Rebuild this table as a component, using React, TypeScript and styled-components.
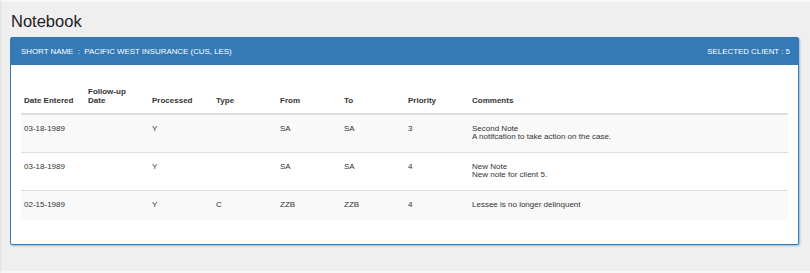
import React, { FunctionComponent } from "react";
import styled, { createGlobalStyle } from "styled-components";

const GlobalStyle = createGlobalStyle`
  html, body {
    margin: 0;
    padding: 0;
    background: #efefef;
  }
  body {
    font-family: "Liberation Sans", Arial, sans-serif;
    color: #333;
  }
`;

const Page = styled.div`
  width: 810px;
  height: 273px;
  box-sizing: border-box;
  padding: 8px 11px 0 8px;
  border-left: 2px solid #e6e6e6;
  border-bottom: 2px solid #f7f7f7;
  border-top: 2px solid #f7f7f7;
`;

const Title = styled.h1`
  margin: 0 0 5px 1px;
  font-size: 16.5px;
  font-weight: normal;
  line-height: 22px;
  color: #222;
`;

const Panel = styled.div`
  background: #fff;
  border: 1px solid #337ab7;
  border-radius: 2px;
  box-shadow: 1px 1px 2px rgba(51, 122, 183, 0.45);
`;

const PanelHeader = styled.div`
  display: flex;
  justify-content: space-between;
  align-items: center;
  height: 27px;
  padding: 0 8px 0 10px;
  background: #337ab7;
  color: #fff;
  font-size: 7.9px;
  text-transform: uppercase;
`;

const PanelBody = styled.div`
  padding: 13px 10px 24px 10px;
`;

const Row = styled.div<{ head?: boolean; striped?: boolean }>`
  display: grid;
  grid-template-columns: repeat(7, 64px) 1fr;
  align-items: ${({ head }) => (head ? "end" : "start")};
  background: ${({ striped }) => (striped ? "#f9f9f9" : "#fff")};
  border-bottom: ${({ head }) => (head ? "2px solid #ddd" : "none")};
  border-top: ${({ head }) => (head ? "none" : "1px solid #ddd")};
  &:nth-child(2) {
    border-top: none;
  }
`;

const Cell = styled.div<{ head?: boolean }>`
  padding: ${({ head }) => (head ? "9px 3px 8px" : "10px 3px 11px")};
  font-size: 8px;
  line-height: ${({ head }) => (head ? "9px" : "8px")};
  font-weight: ${({ head }) => (head ? "bold" : "normal")};
  color: #333;
  white-space: pre-line;
`;

const columns = [
  "Date Entered",
  "Follow-up\nDate",
  "Processed",
  "Type",
  "From",
  "To",
  "Priority",
  "Comments",
];

const notes = [
  ["03-18-1989", "", "Y", "", "SA", "SA", "3", "Second Note\nA notifcation to take action on the case."],
  ["03-18-1989", "", "Y", "", "SA", "SA", "4", "New Note\nNew note for client 5."],
  ["02-15-1989", "", "Y", "C", "ZZB", "ZZB", "4", "Lessee is no longer delinquent"],
];

const App: FunctionComponent = () => {
  return (
    <>
      <GlobalStyle />
      <Page>
        <Title>Notebook</Title>
        <Panel>
          <PanelHeader>
            <span>Short Name &nbsp;:&nbsp; Pacific West Insurance (CUS, LES)</span>
            <span>Selected Client : 5</span>
          </PanelHeader>
          <PanelBody>
            <Row head>
              {columns.map((c) => (
                <Cell head key={c}>
                  {c}
                </Cell>
              ))}
            </Row>
            {notes.map((n, i) => (
              <Row key={i} striped={i % 2 === 0}>
                {n.map((v, j) => (
                  <Cell key={j}>{v}</Cell>
                ))}
              </Row>
            ))}
          </PanelBody>
        </Panel>
      </Page>
    </>
  );
};

export default App;
